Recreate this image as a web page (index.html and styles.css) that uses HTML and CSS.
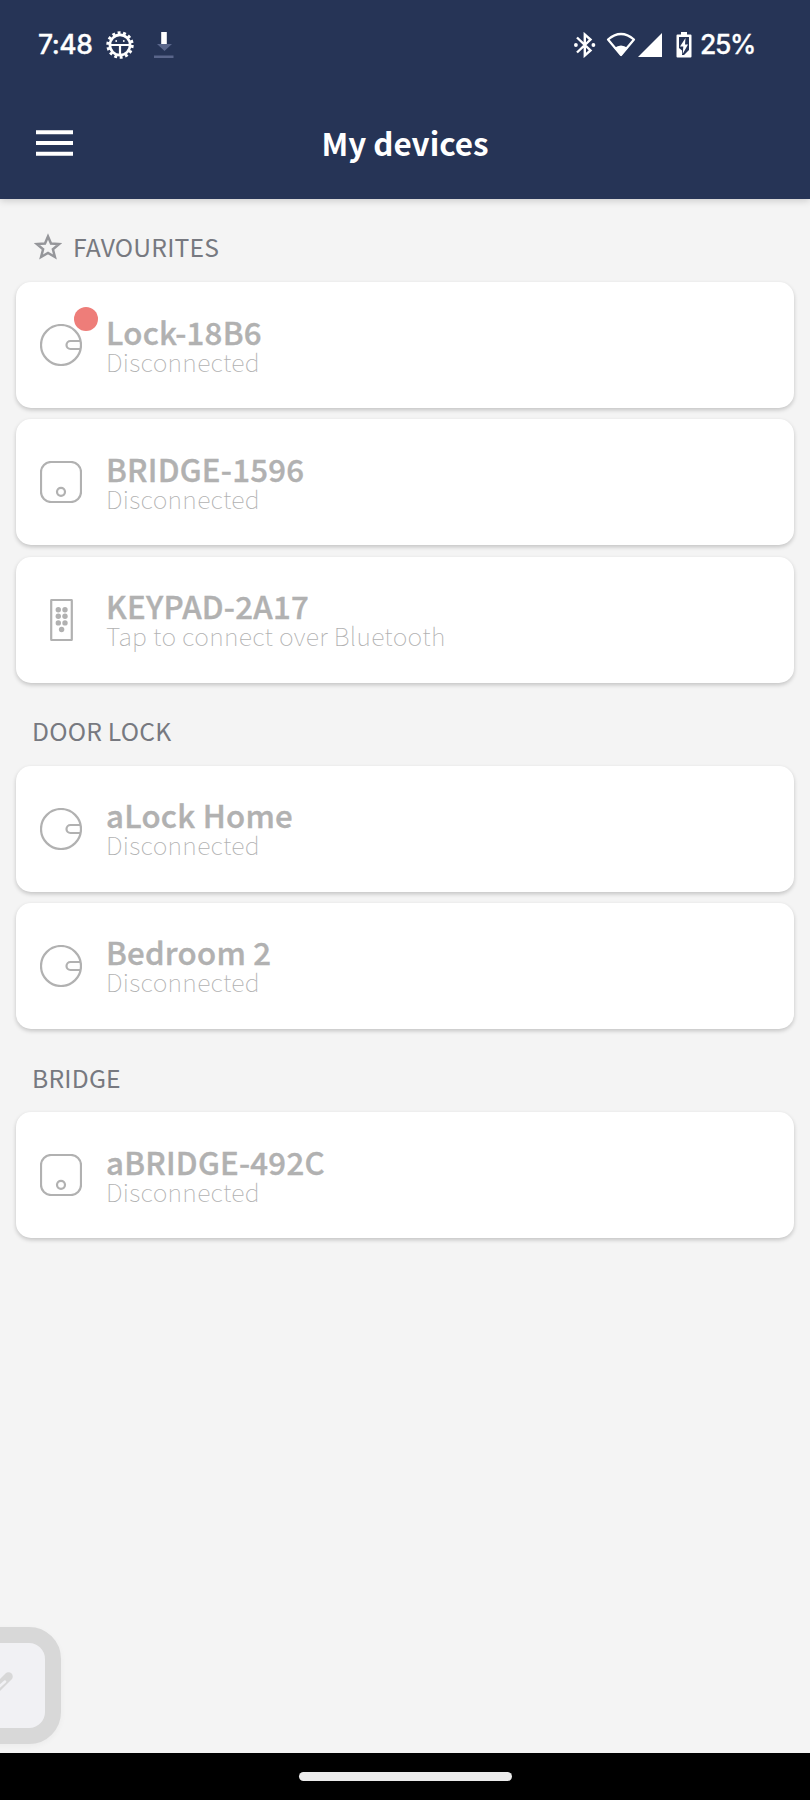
FILE: index.html
```
<!DOCTYPE html>
<html lang="en">
<head>
<meta charset="utf-8">
<title>My devices</title>
<link rel="stylesheet" href="styles.css">
</head>
<body>
<svg class="sprite" aria-hidden="true">
  <symbol id="lock" viewBox="0 0 42 42">
    <circle cx="21" cy="21" r="20"/>
    <path d="M40 17H30.5a4 4 0 0 0 0 8H40"/>
  </symbol>
  <symbol id="bridge" viewBox="0 0 42 42">
    <rect x="1" y="1" width="40" height="40" rx="10"/>
    <circle cx="21" cy="30.8" r="4"/>
  </symbol>
  <symbol id="keypad" viewBox="0 0 42 42">
    <rect x="11.2" y="1" width="20.6" height="40" rx=".5"/>
    <g fill="currentColor" stroke="none">
      <circle cx="18.3" cy="10.8" r="2.7"/><circle cx="25" cy="10.8" r="2.7"/>
      <circle cx="18.3" cy="17.3" r="2.7"/><circle cx="25" cy="17.3" r="2.7"/>
      <circle cx="18.3" cy="23.9" r="2.7"/><circle cx="25" cy="23.9" r="2.7"/>
      <circle cx="21.6" cy="30.5" r="2.7"/>
    </g>
  </symbol>
</svg>
<div class="screen">
  <header class="top">
    <div class="status">
      <span class="clock">7:48</span>
      <svg class="bug" width="28" height="28" viewBox="-14 -14 28 28" fill="none" stroke="#fff">
        <circle r="12.200" stroke-width="3" stroke-dasharray="2.900 2.575"/>
        <circle r="10.100" stroke-width="2.600"/>
        <path d="M-10 0H10M0 0V10" stroke-width="2.200"/>
        <circle cx="-3.800" cy="-4" r=".9" fill="#fff" stroke="none"/><circle cx="3.800" cy="-4" r=".9" fill="#fff" stroke="none"/>
      </svg>
      <svg class="download" width="20" height="26" viewBox="0 0 20 26">
        <path d="M3 12H18L10.500 19z M0 23.500H19.500V26H0z" fill="#59658a"/>
        <path d="M7.200 0H12.800V12H7.200z" fill="#fff"/>
      </svg>
      <span class="spacer"></span>
      <svg class="bluetooth" width="22" height="26" viewBox="0 0 22 26" fill="none" stroke="#fff" stroke-width="2.400">
        <path d="M3 5.500 16.500 18.500 10.800 23.500V2.500L16.500 7.500 3 20.500"/>
        <circle cx="1.900" cy="13" r="1.900" fill="#fff" stroke="none"/><circle cx="19.400" cy="13" r="1.900" fill="#fff" stroke="none"/>
      </svg>
      <svg class="wifi" width="30" height="26" viewBox="0 0 30 26">
        <path d="M2 7.500Q15-3.500 28 7.500L15 23z" fill="none" stroke="#fff" stroke-width="2.200" stroke-linejoin="round"/>
        <path d="M8.300 16Q15 11 21.700 16L15 24z" fill="#fff"/>
      </svg>
      <svg class="signal" width="24" height="24" viewBox="0 0 24 24"><path d="M24 0V24H0z" fill="#fff"/></svg>
      <svg class="battery" width="16" height="26" viewBox="0 0 16 26">
        <path d="M5 0h6v2.500h3.500q1 0 1 1v21q0 1-1 1h-13q-1 0-1-1v-21q0-1 1-1H5z" fill="#fff"/>
        <path d="M3 5h10v13q-2 2-5 5H6V18.500L3 16z" fill="#263456"/>
        <path d="M9.500 6 4 14.500h3.300L6.700 22 12 12.500H9z" fill="#fff"/>
      </svg>
      <span class="percent">25%</span>
    </div>
    <div class="bar">
      <svg class="menu" width="37" height="26" viewBox="0 0 37 26"><path d="M0 2.200H37M0 13H37M0 23.700H37" stroke="#fff" stroke-width="4"/></svg>
      <h1>My devices</h1>
    </div>
  </header>
  <main>
    <h2 class="starred"><svg class="star" width="28" height="28" viewBox="0 0 28 28"><path d="M14 3.500 17 10.600 25 11.100 18.900 16.200 20.900 24 14 19.900 7.100 24 9.100 16.200 3 11.100 11 10.600z"/></svg><span>FAVOURITES</span></h2>
    <section class="list">
      <article class="card"><div class="icon"><svg><use href="#lock"/></svg><i class="alert"></i></div><div><h3>Lock-18B6</h3><p>Disconnected</p></div></article>
      <article class="card"><div class="icon"><svg><use href="#bridge"/></svg></div><div><h3>BRIDGE-1596</h3><p>Disconnected</p></div></article>
      <article class="card"><div class="icon"><svg><use href="#keypad"/></svg></div><div><h3>KEYPAD-2A17</h3><p>Tap to connect over Bluetooth</p></div></article>
    </section>
    <h2>DOOR LOCK</h2>
    <section class="list">
      <article class="card"><div class="icon"><svg><use href="#lock"/></svg></div><div><h3>aLock Home</h3><p>Disconnected</p></div></article>
      <article class="card"><div class="icon"><svg><use href="#lock"/></svg></div><div><h3>Bedroom 2</h3><p>Disconnected</p></div></article>
    </section>
    <h2>BRIDGE</h2>
    <section class="list">
      <article class="card"><div class="icon"><svg><use href="#bridge"/></svg></div><div><h3>aBRIDGE-492C</h3><p>Disconnected</p></div></article>
    </section>
  </main>
  <div class="edit"><svg width="50" height="85" viewBox="0 0 50 85"><path d="M4 30.500 7.500 33 11.500 29 17 34.500 0 51 -8 51V43z" fill="none"/><path d="M-10 52 8.500 33.500" stroke="#d8d8d8" stroke-width="8.500" stroke-linejoin="round" stroke-linecap="round"/><path d="M-10 52 5 38.500" stroke="#f1f1f4" stroke-width="2.500" stroke-linecap="round"/></svg></div>
  <footer><span class="pill"></span></footer>
</div>
</body>
</html>
```
FILE: styles.css
```
* { box-sizing: border-box; }
body { margin: 0; background: #f4f4f4; font-family: "Noto Sans CJK SC", "Noto Sans", sans-serif; }
h1, h2, h3, p { margin: 0; }
svg { display: block; flex: none; }
.sprite { display: none; }
.screen { position: relative; height: 1800px; display: flex; flex-direction: column; overflow: hidden; }
.top { height: 199px; flex: none; background: #263456; color: #fff; box-shadow: 0 1px 8px rgba(0, 0, 0, .2); }
.status { height: 90px; padding: 0 56px 0 38px; display: flex; align-items: center; font: 500 26.5px/32px Inter, Roboto, sans-serif; }
.clock, .percent { margin-top: -2px; white-space: nowrap; -webkit-text-stroke: .3px currentColor; }
.clock { width: 55px; letter-spacing: -.5px; }
.bug { margin-left: 13px; }
.download { margin-left: 20px; }
.spacer { flex: 1; }
.wifi { margin-left: 10px; }
.signal { margin-left: 2px; }
.battery { margin-left: 14px; }
.percent { margin-left: 8px; width: 54px; letter-spacing: -1.4px; }
.bar { height: 109px; padding: 0 36px; display: grid; grid-template-columns: 37px 1fr 37px; align-items: center; }
.menu { margin-top: -4px; }
h1 { margin-top: -4px; font-size: 31.4px; line-height: 40px; font-weight: 700; text-align: center; }
main { flex: 1; }
h2 { height: 83.3px; padding: 33.4px 32px 0; display: flex; font-size: 24.7px; line-height: 29px; font-weight: 400; letter-spacing: .2px; color: #777980; }
.star { margin: 1px 11px 0 2px; fill: none; stroke: #95969a; stroke-width: 2.5; }
.list { display: flex; flex-direction: column; gap: 11.2px; padding: 0 16px; }
.card { height: 126px; display: flex; align-items: center; gap: 24px; padding: 0 24px; background: #fff; border-radius: 15px; box-shadow: 0 2px 4px rgba(0, 0, 0, .2); color: #b1b1b1; }
.icon { position: relative; width: 42px; height: 42px; flex: none; }
.icon svg { width: 42px; height: 42px; fill: none; stroke: currentColor; stroke-width: 2.2; }
.alert { position: absolute; left: 34px; top: -17px; width: 24px; height: 24px; border-radius: 50%; background: #ee7d79; }
h3 { font-size: 31.2px; line-height: 32px; font-weight: 500; letter-spacing: .25px; -webkit-text-stroke: .4px currentColor; white-space: nowrap; }
p { font-size: 25px; line-height: 27.6px; font-weight: 100; letter-spacing: .28px; white-space: nowrap; }
.edit { position: absolute; left: -40px; top: 1627px; width: 101px; height: 117px; padding-left: 24px; border: 16px solid #d8d8d8; border-radius: 32px; background: #f1f1f4; box-shadow: 0 2px 6px rgba(0, 0, 0, .04); }
.edit svg { overflow: visible; }
footer { height: 47px; flex: none; background: #000; display: flex; justify-content: center; padding-top: 19px; }
.pill { width: 213px; height: 9px; border-radius: 5px; background: #ebebeb; }
```
